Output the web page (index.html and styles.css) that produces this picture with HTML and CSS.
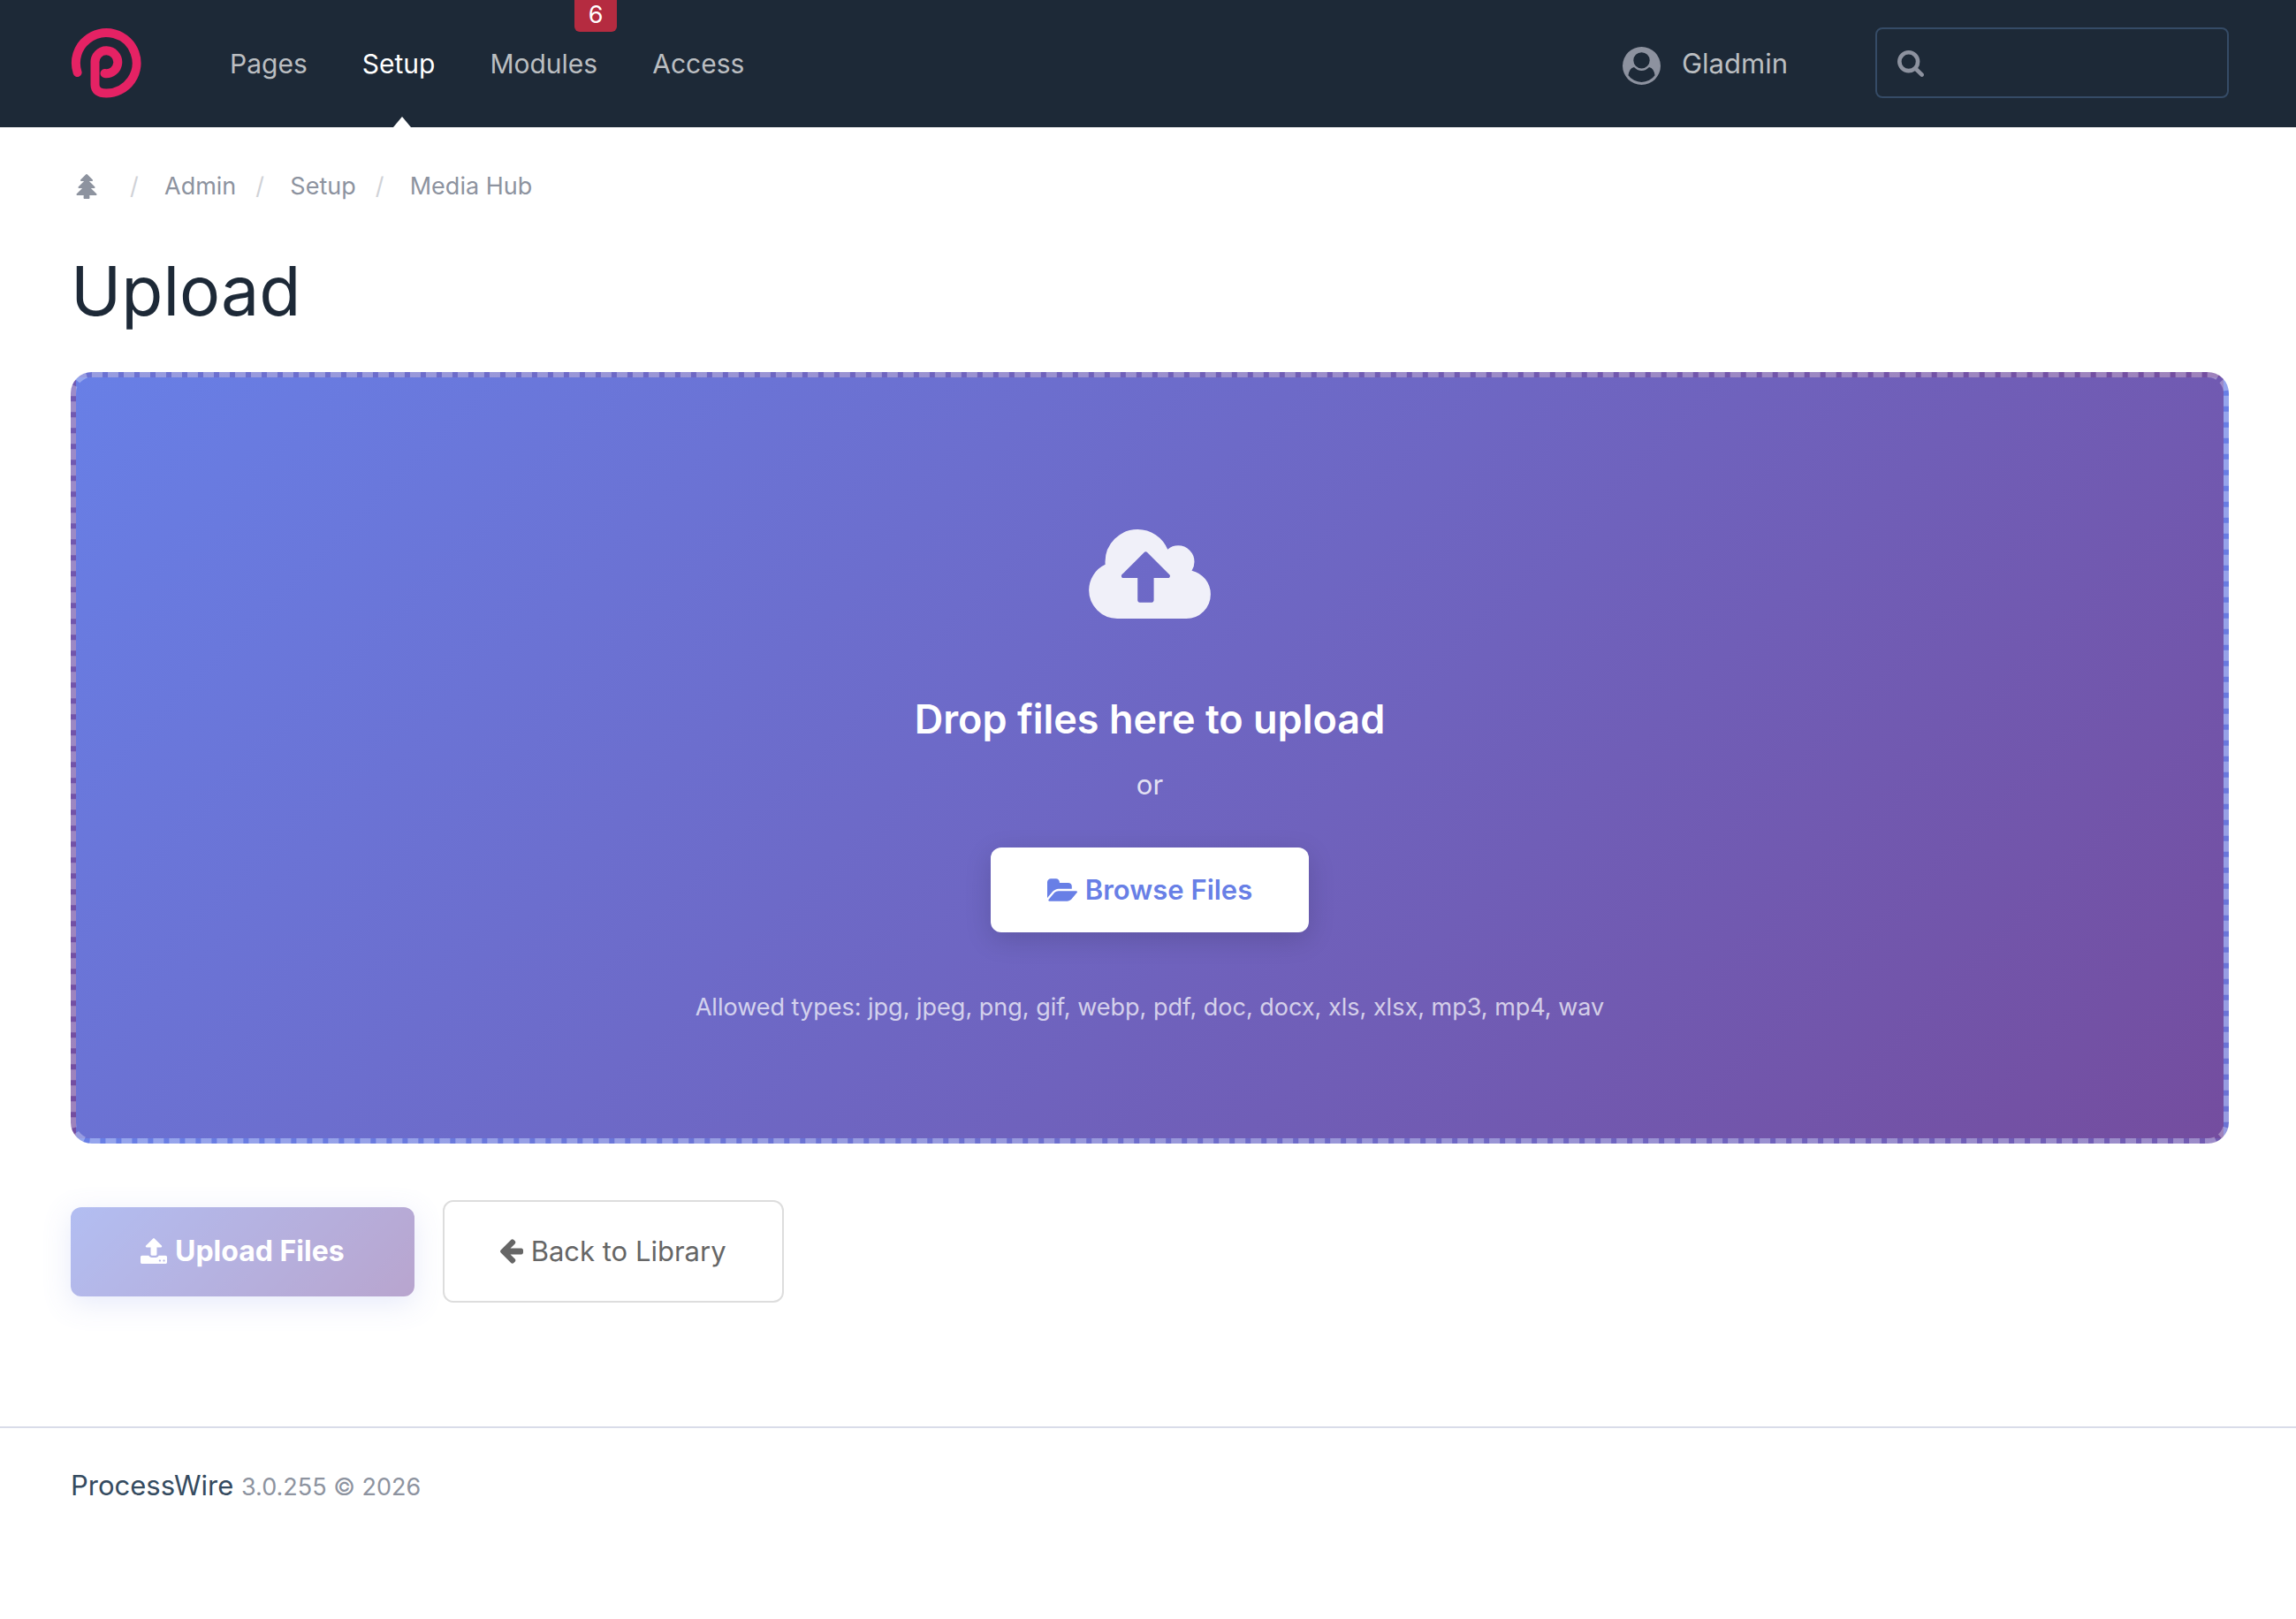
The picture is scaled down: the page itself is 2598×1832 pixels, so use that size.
FILE: index.html
```html
<!DOCTYPE html>
<html lang="en">
<head>
<meta charset="utf-8">
<title>Upload</title>
<link rel="stylesheet" href="styles.css">
</head>
<body>
<header class="masthead">
  <a class="logo" href="#" aria-label="ProcessWire">
    <svg viewBox="0 0 80 80" aria-hidden="true"><path d="M7.600 50C3 36 8 21 18.500 13A34.200 34.200 0 1 1 40.500 73.500C31.500 73.500 27.500 70 27.500 64V39A12.900 12.900 0 1 1 38.500 51" /></svg>
  </a>
  <nav class="main-nav">
    <a href="#">Pages</a>
    <a class="active" href="#">Setup</a>
    <a class="has-badge" href="#">Modules<span class="badge">6</span></a>
    <a href="#">Access</a>
  </nav>
  <a class="user" href="#">
    <svg class="user-icon" viewBox="0 0 1792 1792" aria-hidden="true"><path d="M1523 1339q-22-155-87.500-257.500t-184.500-118.500q-67 74-159.500 115.500t-195.500 41.500-195.500-41.500-159.500-115.500q-119 16-184.500 118.500t-87.500 257.500q106 150 271 237.500t356 87.500 356-87.500 271-237.500zm-243-699q0-159-112.500-271.500t-271.500-112.500-271.500 112.500-112.500 271.500 112.500 271.500 271.500 112.500 271.500-112.500 112.500-271.500zm512 256q0 182-71 347.500t-190.500 286-285.500 191.500-349 71q-182 0-348-71t-286-191-191-286-71-348 71-348 191-286 286-191 348-71 348 71 286 191 191 286 71 348z"/></svg>
    <span>Gladmin</span>
  </a>
  <form class="search">
    <svg class="search-icon" viewBox="64 128 1664 1664" aria-hidden="true"><path d="M1216 832q0-185-131.500-316.500t-316.500-131.500-316.500 131.500-131.500 316.500 131.500 316.500 316.500 131.500 316.500-131.500 131.500-316.500zm512 832q0 52-38 90t-90 38q-54 0-90-38l-343-342q-179 124-399 124-143 0-273.500-55.500t-225-150-150-225-55.500-273.500 55.500-273.500 150-225 225-150 273.500-55.500 273.500 55.500 225 150 150 225 55.500 273.500q0 220-124 399l343 343q37 37 37 90z"/></svg>
    <input type="text" aria-label="Search">
  </form>
</header>

<main class="content">
  <nav aria-label="Breadcrumb">
    <ul class="breadcrumb">
      <li><a href="#" aria-label="Home"><svg class="tree-icon" viewBox="64 0 1472 1792" aria-hidden="true"><path d="M1536 1472q0 26-19 45t-45 19h-462q1 17 6 87.500t5 108.500q0 25-18 42.500t-43 17.500h-320q-25 0-43-17.500t-18-42.500q0-38 5-108.500t6-87.500h-462q-26 0-45-19t-19-45 19-45l402-403h-229q-26 0-45-19t-19-45 19-45l402-403h-197q-26 0-45-19t-19-45 19-45l384-384q19-19 45-19t45 19l384 384q19 19 19 45t-19 45-45 19h-197l402 403q19 19 19 45t-19 45-45 19h-229l402 403q19 19 19 45z"/></svg></a></li>
      <li><a href="#">Admin</a></li>
      <li><a href="#">Setup</a></li>
      <li><a href="#">Media Hub</a></li>
    </ul>
  </nav>
  <h1>Upload</h1>

  <section class="dropzone">
    <svg class="cloud-icon" viewBox="0 128 1920 1408" aria-hidden="true"><path d="M1280 864q0-14-9-23l-352-352q-9-9-23-9t-23 9l-351 351q-10 12-10 24 0 14 9 23t23 9h224v352q0 13 9.500 22.500t22.500 9.500h192q13 0 22.500-9.500t9.500-22.500v-352h224q13 0 22.500-9.500t9.500-22.500zM1920 1152q0 159-112.500 271.500t-271.500 112.500h-1088q-185 0-316.500-131.500t-131.500-316.500q0-130 70-240t188-165q-2-30-2-43 0-212 150-362t362-150q156 0 285.500 87t188.500 231q71-62 166-62 106 0 181 75t75 181q0 76-41 138 130 31 213.500 135.500t83.500 238.500z"/></svg>
    <h2>Drop files here to upload</h2>
    <p class="or">or</p>
    <button class="btn browse" type="button">
      <svg class="folder-icon" viewBox="0 128 1879 1408" aria-hidden="true"><path d="M1879 952q0 31-31 66l-336 396q-43 51-120.500 86.500t-143.500 35.500h-1088q-34 0-60.500-13t-26.500-43q0-31 31-66l336-396q43-51 120.500-86.500t143.500-35.500h1088q34 0 60.500 13t26.500 43zm-343-344v160h-832q-94 0-197 47.500t-164 119.500l-337 396-5 6q0-4-.5-12.500t-.5-12.500v-960q0-92 66-158t158-66h320q92 0 158 66t66 158v32h544q92 0 158 66t66 158z"/></svg>
      Browse Files
    </button>
    <p class="allowed">Allowed types: jpg, jpeg, png, gif, webp, pdf, doc, docx, xls, xlsx, mp3, mp4, wav</p>
  </section>

  <div class="actions">
    <button class="btn upload" type="submit" disabled>
      <svg class="upload-icon" viewBox="64 64 1664 1600" aria-hidden="true"><path d="M1344 1472q0-26-19-45t-45-19-45 19-19 45 19 45 45 19 45-19 19-45zm256 0q0-26-19-45t-45-19-45 19-19 45 19 45 45 19 45-19 19-45zm128-224v320q0 40-28 68t-68 28h-1472q-40 0-68-28t-28-68v-320q0-40 28-68t68-28h427q21 56 70.500 92t110.500 36h256q61 0 110.500-36t70.500-92h427q40 0 68 28t28 68zm-325-648q-17 40-59 40h-256v448q0 26-19 45t-45 19h-256q-26 0-45-19t-19-45v-448h-256q-42 0-59-40-17-39 14-69l448-448q18-19 45-19t45 19l448 448q31 30 14 69z"/></svg>
      Upload Files
    </button>
    <a class="btn back" href="#">
      <svg class="arrow-icon" viewBox="190 180 1474 1560" aria-hidden="true"><path d="M1664 896v128q0 53-32.500 90.500t-84.500 37.500h-704l293 294q38 36 38 90t-38 90l-75 76q-37 37-90 37-52 0-91-37l-651-652q-37-37-37-90 0-52 37-91l651-650q38-38 91-38 52 0 90 38l75 74q38 38 38 91t-38 91l-293 293h704q52 0 84.500 37.500t32.500 90.500z"/></svg>
      Back to Library
    </a>
  </div>
</main>

<footer class="footer">
  <a href="#">ProcessWire</a> <small>3.0.255 © 2026</small>
</footer>
</body>
</html>
```
FILE: styles.css
```css
* {
  box-sizing: border-box;
}

body {
  margin: 0;
  background: #fff;
  color: #354b60;
  font-family: Inter, "Liberation Sans", sans-serif;
  font-size: 31px;
  line-height: 48px;
}

a {
  color: inherit;
  text-decoration: none;
}

svg {
  display: block;
  flex: none;
  fill: currentColor;
}

/* Header */
.masthead {
  display: flex;
  align-items: center;
  height: 144px;
  padding: 0 76px 0 80px;
  background: #1d2937;
  color: #bbbec1;
}

.logo svg {
  width: 80px;
  height: 80px;
  fill: none;
  stroke: #e52264;
  stroke-width: 10;
  stroke-linecap: round;
}

.main-nav {
  display: flex;
  align-self: stretch;
  gap: 62px;
  margin-left: 100px;
  margin-right: auto;
  font-size: 30px;
}

.main-nav a {
  position: relative;
  display: flex;
  align-items: center;
}

.main-nav .active {
  color: #fff;
}

.main-nav .active::after {
  content: "";
  position: absolute;
  bottom: 0;
  left: 50%;
  margin-left: -6px;
  border: 10px solid transparent;
  border-top: 0;
  border-bottom: 12px solid #fff;
}

.badge {
  position: absolute;
  top: 0;
  right: -22px;
  width: 48px;
  height: 36px;
  border-radius: 0 0 6px 6px;
  background: #b52b40;
  color: #fff;
  font-size: 27px;
  line-height: 34px;
  text-align: center;
}

.user {
  display: flex;
  align-items: center;
  gap: 24px;
  margin-right: 99px;
}

.user-icon {
  width: 43px;
  height: 43px;
  margin-top: 4px;
  color: #8d929f;
}

.search {
  display: grid;
  align-items: center;
  width: 400px;
  margin-bottom: 2px;
}

.search > * {
  grid-area: 1 / 1;
}

.search-icon {
  width: 30px;
  height: 30px;
  margin-top: 2px;
  margin-left: 25px;
  color: #8d929f;
  pointer-events: none;
}

.search input {
  width: 100%;
  height: 80px;
  padding: 0 24px 0 68px;
  border: 2px solid #354b66;
  border-radius: 8px;
  background: transparent;
  color: #fff;
  font: inherit;
}

/* Page */
.content {
  padding: 43px 76px 140px 80px;
}

.breadcrumb {
  display: flex;
  margin: 0;
  padding: 0;
  list-style: none;
  color: #8d939f;
  font-size: 27px;
}

.breadcrumb li {
  display: flex;
  align-items: center;
}

.breadcrumb li + li::before {
  content: "/";
  width: 39px;
  margin-left: 22px;
  color: #d0d2d7;
}

.breadcrumb li:first-child {
  padding: 0 15px 0 6px;
}

.tree-icon {
  width: 24px;
  height: 28px;
}

h1 {
  margin: 38px 0 36px;
  color: #1d2937;
  font-size: 77px;
  font-weight: 400;
  line-height: 112px;
}

.dropzone {
  display: flex;
  flex-direction: column;
  align-items: center;
  padding: 172px 40px 124px;
  border: 6px dashed rgba(255, 255, 255, 0.3);
  border-radius: 24px;
  background: linear-gradient(135deg, #687fe6 0%, #744d9f 100%);
  color: #fff;
}

.cloud-icon {
  width: 138px;
  height: 101px;
  opacity: 0.9;
}

h2 {
  margin: 82px 0 18px;
  font-size: 45px;
  font-weight: 600;
  line-height: 64px;
}

.or {
  margin: 0 0 47px;
  opacity: 0.8;
}

.btn {
  display: flex;
  align-items: center;
  justify-content: center;
  gap: 9px;
  border: 0;
  border-radius: 12px;
  font: inherit;
  line-height: 48px;
}

.browse {
  padding: 24px 64px;
  background: #fff;
  box-shadow: 0 8px 30px rgba(0, 0, 0, 0.15);
  color: #687fe6;
  font-weight: 600;
}

.folder-icon {
  width: 34px;
  height: 26px;
}

.allowed {
  margin: 61px 0 0;
  font-size: 27px;
  opacity: 0.7;
}

.actions {
  display: flex;
  align-items: center;
  gap: 32px;
  margin-top: 64px;
}

.upload {
  padding: 26px 79px 27px;
  background: linear-gradient(135deg, #687fe6 0%, #744d9f 100%);
  box-shadow: 0 8px 30px rgba(102, 126, 234, 0.3);
  color: #fff;
  font-size: 32px;
  font-weight: 700;
  opacity: 0.5;
}

.upload-icon {
  width: 30px;
  height: 29px;
}

.back {
  padding: 32px 63px;
  border: 2px solid #ddd;
  color: #666;
}

.arrow-icon {
  width: 26px;
  height: 28px;
}

/* Footer */
.footer {
  padding: 41px 80px;
  border-top: 2px solid #d9dce9;
}

.footer small {
  color: #8d939f;
  font-size: 27px;
}
```
